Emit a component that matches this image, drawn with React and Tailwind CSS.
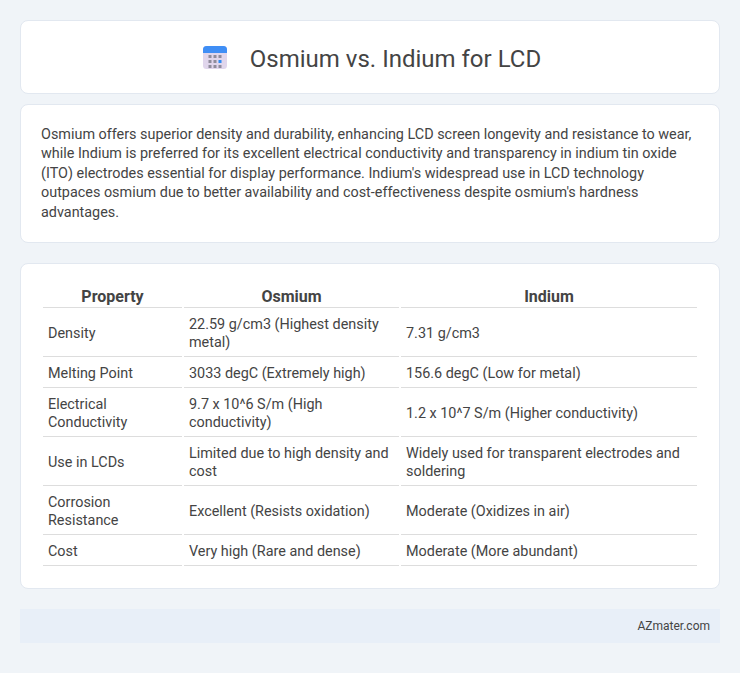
const rows = [
  ["Density", "22.59 g/cm3 (Highest density metal)", "7.31 g/cm3"],
  ["Melting Point", "3033 degC (Extremely high)", "156.6 degC (Low for metal)"],
  ["Electrical Conductivity", "9.7 x 10^6 S/m (High conductivity)", "1.2 x 10^7 S/m (Higher conductivity)"],
  ["Use in LCDs", "Limited due to high density and cost", "Widely used for transparent electrodes and soldering"],
  ["Corrosion Resistance", "Excellent (Resists oxidation)", "Moderate (Oxidizes in air)"],
  ["Cost", "Very high (Rare and dense)", "Moderate (More abundant)"],
];

function CalendarIcon() {
  return (
    <svg width="24" height="24" viewBox="0 0 24 24" className="shrink-0">
      <rect x="0" y="1" width="24" height="23" rx="3.5" fill="#e0d6ec" />
      <path d="M0 8V4.5A3.5 3.5 0 0 1 3.5 1h17A3.5 3.5 0 0 1 24 4.5V8z" fill="#3f8ef5" />
      {[5, 10, 15].map((y) =>
        [5, 10, 15].map((x) => (
          <rect
            key={`${x}-${y}`}
            x={x + 0.5}
            y={y + 5}
            width="3"
            height="3"
            fill={x === 15 && y === 10 ? "#2f8bf5" : "#8f8c9c"}
          />
        )),
      )}
    </svg>
  );
}

export default function App() {
  return (
    <div className="min-h-[673px] bg-[#f0f4f8] p-5 font-['Roboto',sans-serif] text-[14.4px] text-[#444]">
      <div className="mb-2.5 flex h-[74px] items-center justify-center gap-[23px] rounded-lg border border-[#e2e8f0] bg-white pl-1">
        <CalendarIcon />
        <h1 className="pt-1 text-2xl font-normal">Osmium vs. Indium for LCD</h1>
      </div>

      <div className="mb-5 rounded-lg border border-[#e2e8f0] bg-white px-5 py-5 leading-[19.44px]">
        Osmium offers superior density and durability, enhancing LCD screen longevity and resistance to wear, while
        Indium is preferred for its excellent electrical conductivity and transparency in indium tin oxide (ITO)
        electrodes essential for display performance. Indium's widespread use in LCD technology outpaces osmium due to
        better availability and cost-effectiveness despite osmium's hardness advantages.
      </div>

      <div className="mb-5 rounded-lg border border-[#e2e8f0] bg-white px-5 py-5">
        <table className="w-full border-separate border-spacing-[2px] leading-[18px]">
          <thead>
            <tr>
              <th className="w-[139px] border-b border-[#ddd] pt-[2px] pb-px text-[16px] font-bold">Property</th>
              <th className="w-[215px] border-b border-[#ddd] pt-[2px] pb-px text-[16px] font-bold">Osmium</th>
              <th className="border-b border-[#ddd] pt-[2px] pb-px text-[16px] font-bold">Indium</th>
            </tr>
          </thead>
          <tbody>
            {rows.map(([prop, osmium, indium]) => (
              <tr key={prop}>
                <td className="border-b border-[#ddd] px-[5px] pt-1.5 pb-1">{prop}</td>
                <td className="border-b border-[#ddd] px-[5px] pt-1.5 pb-1">{osmium}</td>
                <td className="border-b border-[#ddd] px-[5px] pt-1.5 pb-1">{indium}</td>
              </tr>
            ))}
          </tbody>
        </table>
      </div>

      <div className="bg-[#e8eff8] px-2.5 py-2 text-right text-[12px] leading-[18px]">AZmater.com</div>
    </div>
  );
}
